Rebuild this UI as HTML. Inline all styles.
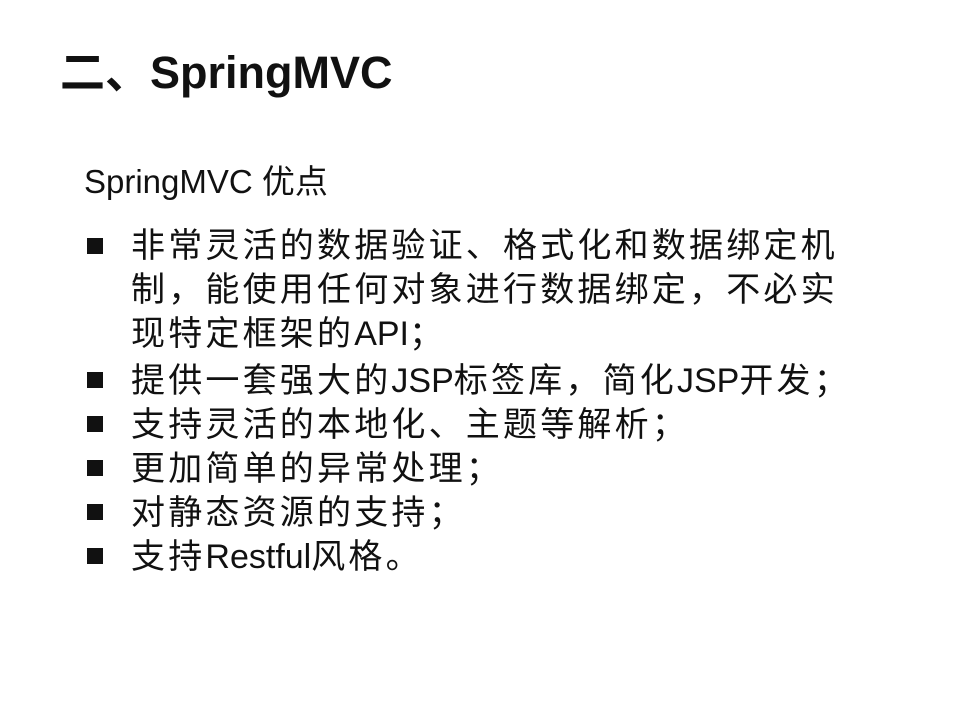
<!DOCTYPE html>
<html><head><meta charset="utf-8"><style>
body{margin:0;width:960px;height:720px;background:#fff;position:relative;overflow:hidden;font-family:"Liberation Sans","Noto Sans CJK SC",sans-serif;color:#111}
.t{position:absolute;left:60px;top:46px;font-size:45px;font-weight:bold;line-height:54px;white-space:nowrap}
.s{position:absolute;left:84px;top:162px;font-size:33px;line-height:40px;white-space:nowrap}
.l{position:absolute;left:131px;font-size:34px;line-height:44px;letter-spacing:3.2px;white-space:nowrap}
.l i{font-style:normal;letter-spacing:0}
.b{position:absolute;left:87px;width:16px;height:16px;background:#111}
</style></head><body>
<div class="t">二、SpringMVC</div>
<div class="s">SpringMVC 优点</div>
<div class="b" style="top:238px"></div>
<div class="l" style="top:224px">非常灵活的数据验证、格式化和数据绑定机<br>制，能使用任何对象进行数据绑定，不必实<br>现特定框架的<i>API</i>；</div>
<div class="b" style="top:372px"></div>
<div class="l" style="top:359px">提供一套强大的<i>JSP</i>标签库，简化<i>JSP</i>开发；</div>
<div class="b" style="top:416px"></div>
<div class="l" style="top:403px">支持灵活的本地化、主题等解析；</div>
<div class="b" style="top:460px"></div>
<div class="l" style="top:447px">更加简单的异常处理；</div>
<div class="b" style="top:504px"></div>
<div class="l" style="top:491px">对静态资源的支持；</div>
<div class="b" style="top:548px"></div>
<div class="l" style="top:535px">支持<i>Restful</i>风格。</div>
</body></html>
